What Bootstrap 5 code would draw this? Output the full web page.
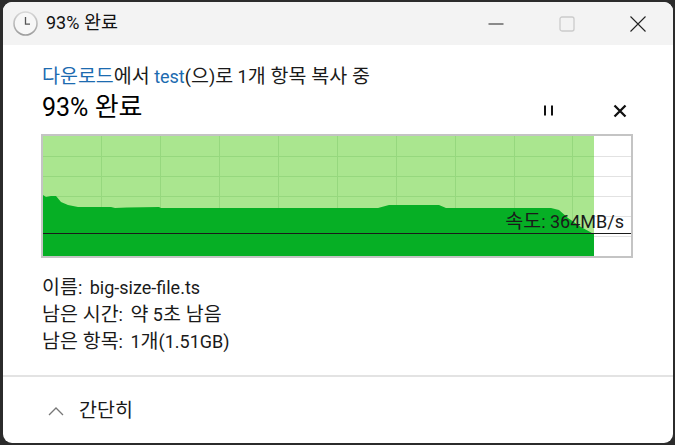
<!DOCTYPE html>
<html lang="ko">
<head>
<meta charset="utf-8">
<title>93% 완료</title>
<link rel="stylesheet" href="https://cdn.jsdelivr.net/npm/bootstrap@5.3.0/dist/css/bootstrap.min.css">
<style>
html,body{height:100%}
body{background:#2b2b2b;padding:2px 2px 2px 3px;overflow:hidden;font-family:Roboto,"Noto Sans CJK KR",sans-serif;color:#1a1a1a;font-size:18px}
.win{height:441px;width:670px;background:#fff;border-radius:9px;overflow:hidden}
.ttl{height:43px;background:#f3f3f3;padding-left:10px}
.ttl-text{font-size:18px;margin-left:8px;color:#111}
.ctrls{margin-left:auto;padding-right:0}
.ctl{width:71px;height:43px}
.main{padding:20px 40px 0 39px}
.ko{font-size:19.5px}
.line1{line-height:24px;height:24px}
.blue{color:#1c6bb0}
.line2{font-size:25px;line-height:32px;color:#000;height:32px;margin-top:2px}
.line2 .ko{font-size:26px}
.ttl-text .ko{font-size:18.5px}
.acts{gap:58px;padding-right:6px;padding-top:10px}
.chart{width:592px;height:124px;border:2px solid #c4c4c4;margin-top:11px;margin-left:-1px;position:relative;background:#fff}
.chart svg{display:block}
.spd{position:absolute;right:7px;top:74px;line-height:24px;color:#1a1a1a}
.det{margin-top:16px;line-height:27px;color:#1a1a1a}
.lbl{margin-right:3px}
.sep{height:2px;background:#e3e3e3;margin-top:20px}
.foot{height:65px;padding-left:45px;gap:15px;padding-top:3px}
</style>
</head>
<body>
<div class="win d-flex flex-column">
  <div class="ttl d-flex align-items-center">
    <svg width="25" height="25" viewBox="0 0 25 25" aria-hidden="true">
      <defs><linearGradient id="rim" x1="0" y1="0" x2="0" y2="1"><stop offset="0" stop-color="#d8d8d8"/><stop offset="1" stop-color="#9e9e9e"/></linearGradient></defs>
      <circle cx="12.5" cy="12.500" r="11.500" fill="#f7f7f7" stroke="url(#rim)" stroke-width="1.600"/>
      <path d="M12.500 6v7.200h4.500" fill="none" stroke="#555" stroke-width="1.300"/>
    </svg>
    <span class="ttl-text">93% <span class="ko">완료</span></span>
    <div class="ctrls d-flex">
      <div class="ctl d-flex align-items-center justify-content-center"><svg width="16" height="16" viewBox="0 0 16 16" aria-hidden="true"><path d="M0.500 8h15" stroke="#222" stroke-width="1.100"/></svg></div>
      <div class="ctl d-flex align-items-center justify-content-center"><svg width="16" height="16" viewBox="0 0 16 16" aria-hidden="true"><rect x="1" y="1" width="14" height="14" rx="2" fill="none" stroke="#cbcbcb" stroke-width="1.300"/></svg></div>
      <div class="ctl d-flex align-items-center justify-content-center"><svg width="16" height="16" viewBox="0 0 16 16" aria-hidden="true"><path d="M.5.5l15 15M15.500.5l-15 15" stroke="#222" stroke-width="1.100"/></svg></div>
    </div>
  </div>
  <div class="main">
    <div class="line1"><span class="blue ko">다운로드</span><span class="ko">에서</span> <span class="blue">test</span>(<span class="ko">으</span>)<span class="ko">로</span> 1<span class="ko">개 항목 복사 중</span></div>
    <div class="d-flex justify-content-between align-items-center">
      <div class="line2">93% <span class="ko">완료</span></div>
      <div class="acts d-flex align-items-center">
        <svg width="12" height="12" viewBox="0 0 12 12" aria-hidden="true"><path d="M2 0.500v10M9 0.500v10" stroke="#111" stroke-width="2"/></svg>
        <svg width="14" height="14" viewBox="0 0 14 14" aria-hidden="true"><path d="M1.500 1.500l11 11M12.500 1.500l-11 11" stroke="#111" stroke-width="2.300"/></svg>
      </div>
    </div>
    <div class="chart">
      <svg width="588" height="120" viewBox="0 0 588 120" aria-hidden="true">
        <rect x="0" y="0" width="551" height="120" fill="#aae68f"/>
        <g stroke="#e2e2e2" stroke-width="1">
          <path d="M551 20.500h37M551 40.500h37M551 60.500h37M551 80.500h37M551 100.500h37"/>
        </g>
        <g stroke="#96d87e" stroke-width="1">
          <path d="M0 20.500h551M0 40.500h551M0 60.500h551"/>
          <path d="M58.500 0v120M117.500 0v120M176.500 0v120M235.500 0v120M294.500 0v120M353.500 0v120M412.500 0v120M471.500 0v120M529.500 0v120"/>
        </g>
        <path d="M0 59 L3 61 L8 60 L13 60 L18 66 L25 69 L35 71 L68 71 L72 72 L84 71.500 L116 71 L118 72 L335 72 L346 69 L396 69 L403 72 L508 72 L516 74 L525 82 L538 91 L549 97 L551 97 V120 H0Z" fill="#06af25"/>
        <path d="M0 97.500h588" stroke="#1a1a1a" stroke-width="1"/>
      </svg>
      <span class="spd"><span class="ko">속도</span>: 364MB/s</span>
    </div>
    <div class="det">
      <div><span class="ko">이름</span>:<span class="lbl"></span> big-size-file.ts</div>
      <div><span class="ko">남은 시간</span>:<span class="lbl"></span> <span class="ko">약</span> 5<span class="ko">초 남음</span></div>
      <div><span class="ko">남은 항목</span>:<span class="lbl"></span> 1<span class="ko">개</span>(1.51GB)</div>
    </div>
  </div>
  <div class="sep"></div>
  <div class="foot d-flex align-items-center">
    <svg width="16" height="10" viewBox="0 0 16 10" aria-hidden="true"><path d="M1 9l7-7 7 7" fill="none" stroke="#777" stroke-width="1.300"/></svg>
    <span class="ko">간단히</span>
  </div>
</div>
<script src="https://cdn.jsdelivr.net/npm/bootstrap@5.3.0/dist/js/bootstrap.bundle.min.js"></script>
</body>
</html>
